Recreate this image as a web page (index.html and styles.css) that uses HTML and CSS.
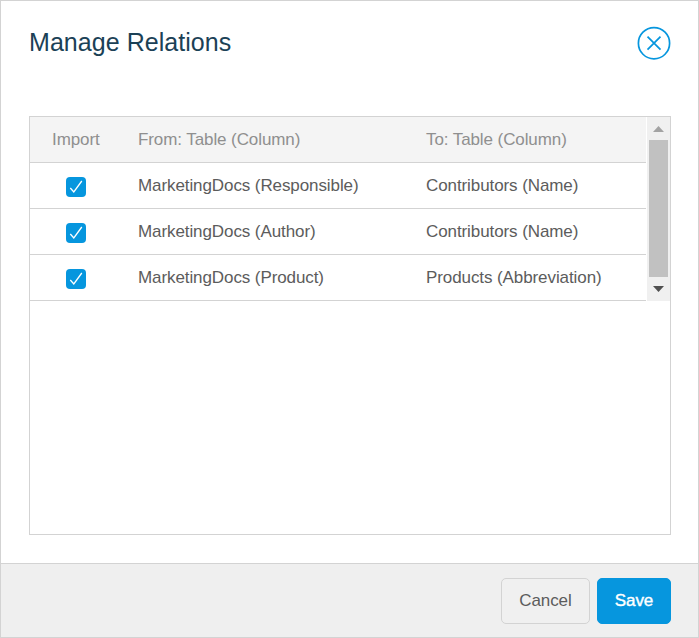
FILE: index.html
```html
<!DOCTYPE html>
<html lang="en">
<head>
<meta charset="utf-8">
<title>Manage Relations</title>
<link rel="stylesheet" href="styles.css">
</head>
<body>
<div class="dialog" role="dialog" aria-labelledby="title">
  <header class="dialog-header">
    <h1 id="title">Manage Relations</h1>
    <button class="close" aria-label="Close">
      <svg width="34" height="34" viewBox="0 0 34 34"><circle cx="17" cy="17.2" r="15.6"/><path d="M10.5 10.7 23.5 23.7M23.5 10.7 10.5 23.7"/></svg>
    </button>
  </header>
  <main class="panel">
    <div class="scroll-area">
      <div class="table">
        <div class="row head"><span>Import</span><span>From: Table (Column)</span><span>To: Table (Column)</span></div>
        <div class="row"><span class="check"><svg width="20" height="20" viewBox="0 0 20 20"><path d="M4.3 11 7.8 15 15.8 4"/></svg></span><span>MarketingDocs (Responsible)</span><span>Contributors (Name)</span></div>
        <div class="row"><span class="check"><svg width="20" height="20" viewBox="0 0 20 20"><path d="M4.3 11 7.8 15 15.8 4"/></svg></span><span>MarketingDocs (Author)</span><span>Contributors (Name)</span></div>
        <div class="row"><span class="check"><svg width="20" height="20" viewBox="0 0 20 20"><path d="M4.3 11 7.8 15 15.8 4"/></svg></span><span>MarketingDocs (Product)</span><span>Products (Abbreviation)</span></div>
      </div>
      <div class="scrollbar">
        <svg class="up" width="11" height="6" viewBox="0 0 11 6"><path d="M0 6 5.5 0 11 6Z"/></svg>
        <div class="thumb"></div>
        <svg class="down" width="11" height="6" viewBox="0 0 11 6"><path d="M0 0H11L5.5 6Z"/></svg>
      </div>
    </div>
  </main>
  <footer class="dialog-footer">
    <button class="btn cancel">Cancel</button>
    <button class="btn save">Save</button>
  </footer>
</div>
</body>
</html>
```
FILE: styles.css
```css
* { box-sizing: border-box; }

body {
  margin: 0;
  font-family: "Liberation Sans", Arial, sans-serif;
  font-size: 17px;
  color: #5c5c5c;
}

.dialog {
  display: flex;
  flex-direction: column;
  width: 699px;
  height: 638px;
  border: 1px solid #d3d3d3;
  background: #fff;
}

.dialog-header {
  display: flex;
  justify-content: space-between;
  align-items: flex-start;
  height: 115px;
  padding: 25px 27px 0 28px;
}

h1 {
  margin: 0;
  font-size: 25px;
  font-weight: 400;
  line-height: 32px;
  letter-spacing: 0.05px;
  color: #1b4156;
}

.close {
  width: 34px;
  height: 34px;
  padding: 0;
  border: 0;
  background: none;
}

.close svg {
  display: block;
  fill: none;
  stroke: #0696de;
  stroke-width: 1.7;
}

.panel {
  height: 419px;
  margin: 0 27px 0 28px;
  border: 1px solid #d3d3d3;
}

.scroll-area {
  display: flex;
  gap: 1px;
  height: 184px;
}

.table {
  flex: 1;
  letter-spacing: -0.09px;
}

.row {
  display: grid;
  grid-template-columns: 108px 288px 1fr;
  align-items: center;
  height: 46px;
  border-bottom: 1px solid #d3d3d3;
}

.head {
  background: #f4f4f4;
  color: #8f8f8f;
}

.head span:first-child { padding-left: 22px; }

.check {
  width: 20px;
  height: 20px;
  margin: 3px 0 0 36px;
  border-radius: 4px;
  background: #0696de;
}

.check svg {
  display: block;
  fill: none;
  stroke: #fff;
  stroke-width: 1.3;
}

.scrollbar {
  display: flex;
  flex-direction: column;
  align-items: center;
  width: 23px;
  padding: 9px 0;
  background: #f0f0f0;
}

.up { fill: #a3a3a3; }

.down { fill: #505050; }

.thumb {
  width: 19px;
  height: 137px;
  margin: 8px 0 9px;
  background: #c1c1c1;
}

.dialog-footer {
  display: flex;
  justify-content: flex-end;
  gap: 7px;
  height: 74px;
  margin-top: auto;
  padding: 14px 27px 0;
  border-top: 1px solid #d3d3d3;
  background: #efefef;
}

.btn {
  height: 46px;
  padding: 0 0 1px;
  border: 1px solid #d3d3d3;
  border-radius: 5px;
  font: inherit;
  letter-spacing: -0.09px;
}

.cancel {
  width: 89px;
  background: #f0f0f0;
  color: #5c5c5c;
}

.save {
  width: 74px;
  border-color: #0696de;
  background: #0696de;
  color: #fff;
  -webkit-text-stroke: 0.4px #fff;
}
```
